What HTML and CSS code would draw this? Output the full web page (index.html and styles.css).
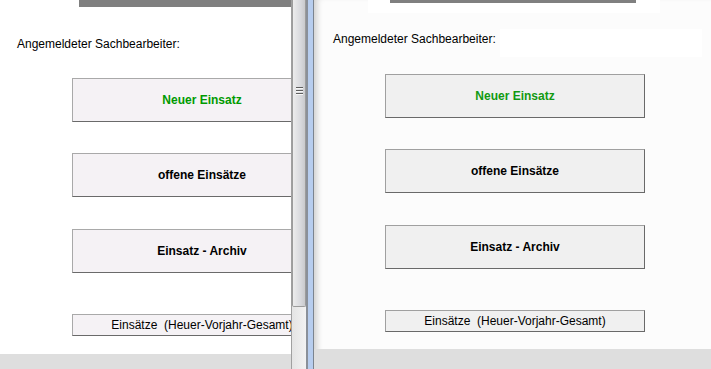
FILE: index.html
```html
<!DOCTYPE html>
<html lang="de">
<head>
  <meta charset="UTF-8">
  <meta name="viewport" content="width=device-width, initial-scale=1.0">
  <title>Einsatzverwaltung - Vergleich</title>
  <link rel="stylesheet" href="styles.css">
</head>
<body>

<div class="pane pane-alt">
  <div class="sheet">
    <div class="head"><div class="head-bar"></div></div>
    <div class="login-row">
      <span class="login-label">Angemeldeter Sachbearbeiter:</span>
    </div>
    <button class="btn btn-big btn-new">Neuer Einsatz</button>
    <button class="btn btn-big">offene Einsätze</button>
    <button class="btn btn-big">Einsatz - Archiv</button>
    <button class="btn btn-small">Einsätze&nbsp; (Heuer-Vorjahr-Gesamt)</button>
  </div>
  <div class="band"></div>
</div>

<div class="scrollbar">
  <div class="thumb"><div class="grip"></div></div>
  <div class="track"></div>
</div>

<div class="splitter"></div>

<div class="pane pane-main">
  <div class="sheet">
    <div class="head"><div class="head-bar"></div></div>
    <div class="login-row">
      <span class="login-label">Angemeldeter Sachbearbeiter:</span>
      <span class="login-box"></span>
    </div>
    <button class="btn btn-big btn-new">Neuer Einsatz</button>
    <button class="btn btn-big">offene Einsätze</button>
    <button class="btn btn-big">Einsatz - Archiv</button>
    <button class="btn btn-small">Einsätze&nbsp; (Heuer-Vorjahr-Gesamt)</button>
  </div>
  <div class="band"></div>
</div>

</body>
</html>
```

FILE: styles.css
```css
html, body {
  margin: 0;
  height: 369px;
  overflow: hidden;
}
body {
  display: flex;
  font-family: "Liberation Sans", Arial, sans-serif;
  font-size: 12px;
  color: #000;
}
.pane {
  display: flex;
  flex-direction: column;
  overflow: hidden;
}
.sheet {
  flex: 1;
  display: flex;
  flex-direction: column;
  align-items: flex-start;
}
.band {
  background-color: #dedede;
}

/* linke Ansicht */
.pane-alt {
  width: 291px;
  flex: none;
  background-color: #fff;
}
.pane-alt .head {
  height: 17px;
  padding-left: 79px;
}
.pane-alt .head-bar {
  width: 260px;
  height: 7px;
  background-color: #7f7f7f;
}
.pane-alt .login-row {
  padding-left: 17px;
  margin-top: 16px;
}
.pane-alt .login-label {
  padding-top: 4px;
}
.pane-alt .btn {
  margin-left: 72px;
  background-color: #f5f2f5;
  border-color: #a9a9a9 #a9a9a9 #6a6a6a #a9a9a9;
}
.pane-alt .btn-new {
  color: #009a00;
}
.pane-alt .band {
  height: 15px;
}

/* Scrollleiste + Trenner */
.scrollbar {
  width: 14px;
  flex: none;
  display: flex;
  flex-direction: column;
  border-left: 1px solid #a0a0a0;
  background-color: #ededed;
}
.thumb {
  height: 307px;
  border: 1px solid #9c9c9c;
  border-top: none;
  border-radius: 0 0 2px 2px;
  background: linear-gradient(to right, #ececec, #d9dade 60%, #c9cacd);
  display: flex;
  justify-content: center;
  padding-top: 87px;
  box-sizing: border-box;
}
.grip {
  width: 7px;
  height: 9px;
  background: repeating-linear-gradient(#5e5e5e 0 1px, #f7f7f7 1px 2px, transparent 2px 3px);
}
.track {
  flex: 1;
  background: linear-gradient(to right, #e4e4e4, #f2f2f2);
}
.splitter {
  width: 5px;
  flex: none;
  border-left: 2px solid #8a9099;
  border-right: 1px solid #7b848f;
  background-color: #b7cdee;
}

/* rechte Ansicht */
.pane-main {
  flex: 1;
  background-color: #fcfcfc;
  box-shadow: inset 7px 0 6px -4px rgba(0, 0, 0, 0.18);
}
.pane-main .head {
  height: 13px;
  margin-left: 54px;
  width: 292px;
  background-color: #fff;
}
.pane-main .head-bar {
  width: 246px;
  height: 3px;
  margin-left: 22px;
  background-color: #808080;
}
.pane-main .login-row {
  display: flex;
  align-items: flex-start;
  margin-top: 16px;
  padding-left: 19px;
  height: 28px;
}
.pane-main .login-label {
  padding-top: 3px;
}
.login-box {
  width: 202px;
  height: 28px;
  margin-left: 4px;
  background-color: #fff;
}
.pane-main .btn {
  margin-left: 71px;
  background-color: #f0f0f0;
  border-color: #a0a0a0 #696969 #696969 #a0a0a0;
}
.pane-main .btn-new {
  color: #129a12;
}
.pane-main .band {
  height: 20px;
}

.login-row {
  display: flex;
  height: 28px;
}
.login-label {
  line-height: 14px;
  white-space: nowrap;
}

.btn {
  flex: none;
  width: 260px;
  padding: 0;
  border: 1px solid;
  font-family: "Liberation Sans", Arial, sans-serif;
  font-size: 12px;
  color: #000;
  white-space: nowrap;
  overflow: hidden;
}
.btn-big {
  height: 44px;
  font-weight: bold;
}
.btn-big + .btn-big {
  margin-top: 31px;
}
.btn-new {
  margin-top: 17px;
}
.btn-big + .btn-big + .btn-big {
  margin-top: 32px;
}
.btn-small {
  height: 22px;
  margin-top: 41px;
}
```
